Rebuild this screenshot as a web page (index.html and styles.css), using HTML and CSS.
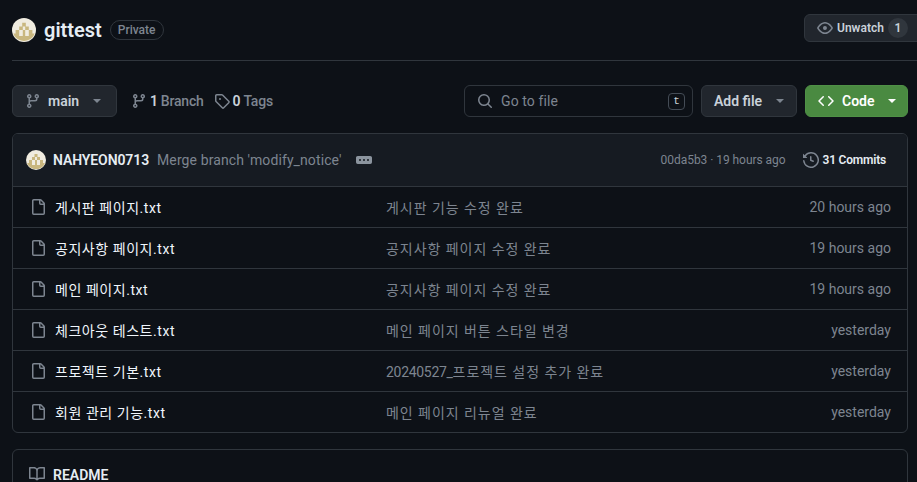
FILE: index.html
```html
<!DOCTYPE html>
<html lang="ko">
<head>
  <meta charset="UTF-8" />
  <title>gittest</title>
  <link rel="stylesheet" href="styles.css">
</head>
<body>

  <svg class="sprite" xmlns="http://www.w3.org/2000/svg">
    <symbol id="i-branch" viewBox="0 0 16 16"><path d="M9.5 3.25a2.25 2.25 0 1 1 3 2.122V6A2.5 2.5 0 0 1 10 8.5H6a1 1 0 0 0-1 1v1.128a2.251 2.251 0 1 1-1.5 0V5.372a2.25 2.25 0 1 1 1.5 0v1.836A2.493 2.493 0 0 1 6 7h4a1 1 0 0 0 1-1v-.628A2.25 2.25 0 0 1 9.5 3.25Zm-6 0a.75.75 0 1 0 1.5 0 .75.75 0 0 0-1.5 0Zm8.25-.75a.75.75 0 1 0 0 1.5.75.75 0 0 0 0-1.5ZM4.25 12a.75.75 0 1 0 0 1.5.75.75 0 0 0 0-1.5Z"/></symbol>
    <symbol id="i-tag" viewBox="0 0 16 16"><path d="M1 7.775V2.75C1 1.784 1.784 1 2.75 1h5.025c.464 0 .91.184 1.238.513l6.25 6.25a1.75 1.75 0 0 1 0 2.474l-5.026 5.026a1.75 1.75 0 0 1-2.474 0l-6.25-6.25A1.752 1.752 0 0 1 1 7.775Zm1.5 0c0 .066.026.13.073.177l6.25 6.25a.25.25 0 0 0 .354 0l5.025-5.025a.25.25 0 0 0 0-.354l-6.25-6.25a.25.25 0 0 0-.177-.073H2.75a.25.25 0 0 0-.25.25ZM6 5a1 1 0 1 1 0 2 1 1 0 0 1 0-2Z"/></symbol>
    <symbol id="i-eye" viewBox="0 0 16 16"><path d="M8 2c1.981 0 3.671.992 4.933 2.078 1.27 1.091 2.187 2.345 2.637 3.023a1.62 1.62 0 0 1 0 1.798c-.45.678-1.367 1.932-2.637 3.023C11.67 13.008 9.981 14 8 14c-1.981 0-3.671-.992-4.933-2.078C1.797 10.83.88 9.576.43 8.898a1.62 1.62 0 0 1 0-1.798c.45-.677 1.367-1.931 2.637-3.022C4.33 2.992 6.019 2 8 2ZM1.679 7.932a.12.12 0 0 0 0 .136c.411.622 1.241 1.75 2.366 2.717C5.176 11.758 6.527 12.5 8 12.5c1.473 0 2.825-.742 3.955-1.715 1.124-.967 1.954-2.096 2.366-2.717a.12.12 0 0 0 0-.136c-.412-.621-1.242-1.75-2.366-2.717C10.824 4.242 9.473 3.5 8 3.5c-1.473 0-2.825.742-3.955 1.715-1.124.967-1.954 2.096-2.366 2.717ZM8 10a2 2 0 1 1-.001-3.999A2 2 0 0 1 8 10Z"/></symbol>
    <symbol id="i-search" viewBox="0 0 16 16"><path d="M10.68 11.74a6 6 0 0 1-7.922-8.982 6 6 0 0 1 8.982 7.922l3.04 3.04a.749.749 0 0 1-.326 1.275.749.749 0 0 1-.734-.215ZM11.5 7a4.499 4.499 0 1 0-8.997 0A4.499 4.499 0 0 0 11.5 7Z"/></symbol>
    <symbol id="i-code" viewBox="0 0 16 16"><path d="m11.28 3.22 4.25 4.25a.75.75 0 0 1 0 1.06l-4.25 4.25a.749.749 0 0 1-1.275-.326.749.749 0 0 1 .215-.734L13.94 8l-3.72-3.72a.749.749 0 0 1 .326-1.275.749.749 0 0 1 .734.215Zm-6.56 0a.751.751 0 0 1 1.042.018.751.751 0 0 1 .018 1.042L2.06 8l3.72 3.72a.749.749 0 0 1-.326 1.275.749.749 0 0 1-.734-.215L.47 8.53a.75.75 0 0 1 0-1.06Z"/></symbol>
    <symbol id="i-file" viewBox="0 0 16 16"><path d="M2 1.75C2 .784 2.784 0 3.75 0h6.586c.464 0 .909.184 1.237.513l2.914 2.914c.329.328.513.773.513 1.237v9.586A1.75 1.75 0 0 1 13.25 16h-9.5A1.75 1.75 0 0 1 2 14.25Zm1.75-.25a.25.25 0 0 0-.25.25v12.5c0 .138.112.25.25.25h9.5a.25.25 0 0 0 .25-.25V6h-2.75A1.75 1.75 0 0 1 9 4.25V1.5Zm6.75.062V4.25c0 .138.112.25.25.25h2.688l-.011-.013-2.914-2.914-.013-.011Z"/></symbol>
    <symbol id="i-history" viewBox="0 0 16 16"><path d="m.427 1.927 1.215 1.215a8.002 8.002 0 1 1-1.6 5.685.75.75 0 1 1 1.493-.154 6.5 6.5 0 1 0 1.18-4.458l1.358 1.358A.25.25 0 0 1 3.896 6H.25A.25.25 0 0 1 0 5.75V2.104a.25.25 0 0 1 .427-.177ZM7.75 4a.75.75 0 0 1 .75.75v2.992l2.028.812a.75.75 0 0 1-.557 1.392l-2.5-1A.751.751 0 0 1 7 8.25v-3.5A.75.75 0 0 1 7.75 4Z"/></symbol>
    <symbol id="i-ellipsis" viewBox="0 0 16 16"><path d="M0 5.75C0 4.784.784 4 1.75 4h12.5c.966 0 1.75.784 1.75 1.75v4.5A1.75 1.75 0 0 1 14.25 12H1.75A1.75 1.75 0 0 1 0 10.25ZM12 7a1 1 0 1 0 0 2 1 1 0 0 0 0-2ZM7 8a1 1 0 1 0 2 0 1 1 0 0 0-2 0ZM4 7a1 1 0 1 0 0 2 1 1 0 0 0 0-2Z"/></symbol>
    <symbol id="i-book" viewBox="0 0 16 16"><path d="M0 1.75A.75.75 0 0 1 .75 1h4.253c1.227 0 2.317.59 3 1.501A3.743 3.743 0 0 1 11.006 1h4.245a.75.75 0 0 1 .75.75v10.5a.75.75 0 0 1-.75.75h-4.507a2.25 2.25 0 0 0-1.591.659l-.622.621a.75.75 0 0 1-1.06 0l-.622-.621A2.25 2.25 0 0 0 5.258 13H.75a.75.75 0 0 1-.75-.75Zm7.251 10.324.004-5.073-.002-2.253A2.25 2.25 0 0 0 5.003 2.5H1.5v9h3.757a3.75 3.75 0 0 1 1.994.574ZM8.755 4.75l-.004 7.322a3.752 3.752 0 0 1 1.992-.572H14.5v-9h-3.495a2.25 2.25 0 0 0-2.25 2.25Z"/></symbol>
    <symbol id="i-avatar" viewBox="0 0 20 20">
      <circle cx="10" cy="10" r="10" fill="#f0ece0"/>
      <path fill="#c9b77f" d="M8.5 4h3v3h-3ZM6 7h3v3H6ZM11 7h3v3h-3ZM3 10h3v3H3ZM9 10h2v3H9ZM14 10h3v3h-3ZM2.5 15.7A10 10 0 0 1 1.2 13H6v2h3v-2h2v2h3v-2h4.8a10 10 0 0 1-1.3 2.7A10 10 0 0 1 2.5 15.7Z"/>
    </symbol>
  </svg>

  <header class="repo-head">
    <div class="repo-title">
      <svg class="avatar-lg"><use href="#i-avatar"/></svg>
      <strong class="repo-name">gittest</strong>
      <span class="label">Private</span>
    </div>
    <button class="btn btn-watch">
      <svg class="icon"><use href="#i-eye"/></svg>
      Unwatch
      <span class="count">1</span>
    </button>
  </header>

  <main class="content">
    <div class="toolbar">
      <button class="btn btn-branch">
        <svg class="icon"><use href="#i-branch"/></svg>
        main
        <span class="caret"></span>
      </button>
      <a class="meta-link"><svg class="icon"><use href="#i-branch"/></svg><b>1</b> Branch</a>
      <a class="meta-link meta-tags"><svg class="icon"><use href="#i-tag"/></svg><b>0</b> Tags</a>
      <div class="file-search">
        <svg class="icon"><use href="#i-search"/></svg>
        <span class="placeholder">Go to file</span>
        <kbd>t</kbd>
      </div>
      <button class="btn btn-add">Add file <span class="caret"></span></button>
      <button class="btn btn-code">
        <svg class="icon"><use href="#i-code"/></svg>
        Code
        <span class="caret"></span>
      </button>
    </div>

    <section class="files">
      <div class="commit-row">
        <svg class="avatar-sm"><use href="#i-avatar"/></svg>
        <strong class="author">NAHYEON0713</strong>
        <span class="commit-msg">Merge branch 'modify_notice'</span>
        <svg class="icon dots"><use href="#i-ellipsis"/></svg>
        <span class="commit-meta">00da5b3 · 19 hours ago</span>
        <span class="commit-count"><svg class="icon"><use href="#i-history"/></svg>31 Commits</span>
      </div>
      <div class="file-row">
        <svg class="icon"><use href="#i-file"/></svg>
        <a class="file-name">게시판 페이지.txt</a>
        <span class="file-msg">게시판 기능 수정 완료</span>
        <span class="file-age">20 hours ago</span>
      </div>
      <div class="file-row">
        <svg class="icon"><use href="#i-file"/></svg>
        <a class="file-name">공지사항 페이지.txt</a>
        <span class="file-msg">공지사항 페이지 수정 완료</span>
        <span class="file-age">19 hours ago</span>
      </div>
      <div class="file-row">
        <svg class="icon"><use href="#i-file"/></svg>
        <a class="file-name">메인 페이지.txt</a>
        <span class="file-msg">공지사항 페이지 수정 완료</span>
        <span class="file-age">19 hours ago</span>
      </div>
      <div class="file-row">
        <svg class="icon"><use href="#i-file"/></svg>
        <a class="file-name">체크아웃 테스트.txt</a>
        <span class="file-msg">메인 페이지 버튼 스타일 변경</span>
        <span class="file-age">yesterday</span>
      </div>
      <div class="file-row">
        <svg class="icon"><use href="#i-file"/></svg>
        <a class="file-name">프로젝트 기본.txt</a>
        <span class="file-msg"><span class="latin">20240527_</span>프로젝트 설정 추가 완료</span>
        <span class="file-age">yesterday</span>
      </div>
      <div class="file-row">
        <svg class="icon"><use href="#i-file"/></svg>
        <a class="file-name">회원 관리 기능.txt</a>
        <span class="file-msg">메인 페이지 리뉴얼 완료</span>
        <span class="file-age">yesterday</span>
      </div>
    </section>

    <section class="readme">
      <svg class="icon"><use href="#i-book"/></svg>
      <strong>README</strong>
    </section>
  </main>

</body>
</html>
```

FILE: styles.css
```css
html, body { height:100%; overflow:hidden; }
body { margin:0; background:#0d1117; color:#e6edf3; font-family:Roboto,"Noto Sans CJK KR",sans-serif; font-size:14px; }
.sprite { position:absolute; width:0; height:0; }
.icon { width:16px; height:16px; fill:#7d8590; flex:none; }

.repo-head { display:flex; justify-content:space-between; align-items:flex-start; height:61px; margin-left:12px; padding-top:14px; box-sizing:border-box; border-bottom:1px solid #30363d; width:905px; }
.repo-title { display:flex; align-items:center; height:32px; }
.avatar-lg { width:24px; height:24px; margin-right:8px; }
.repo-name { font-size:20px; font-weight:600; }
.label { margin-left:8px; padding:0 7px; height:20px; line-height:18px; box-sizing:border-box; font-size:12px; color:#7d8590; border:1px solid #30363d; border-radius:10px; font-weight:500; }

.btn { display:flex; align-items:center; box-sizing:border-box; background:#21262d; color:#c9d1d9; border:1px solid #30363d; border-radius:6px; font-family:inherit; font-weight:600; font-size:14px; height:32px; padding:0 12px; white-space:nowrap; flex:none; }
.btn-watch { width:140px; height:28px; margin-right:-27px; padding:0 12px; font-size:12px; gap:4px; }
.count { width:20px; height:20px; line-height:20px; border-radius:10px; background:#30363d; color:#c9d1d9; text-align:center; }
.caret { display:inline-block; width:0; height:0; border-style:solid; border-width:4px 4px 0; border-color:#7d8590 transparent transparent; margin-left:14px; }

.content { padding:24px 9px 0 12px; }
.toolbar { display:flex; align-items:center; height:32px; }
.btn-branch { width:105px; padding:0 12px; gap:7px; }
.btn-branch .caret { margin-left:7px; }
.meta-link { display:flex; align-items:center; gap:3px; color:#7d8590; margin-left:14px; font-weight:500; letter-spacing:-.2px; white-space:nowrap; }
.meta-link b { color:#c9d1d9; font-weight:600; }
.meta-tags { margin-left:10px; }
.file-search { display:flex; align-items:center; width:229px; height:32px; box-sizing:border-box; margin-left:auto; padding:0 7px 0 12px; border:1px solid #30363d; border-radius:6px; }
.placeholder { margin-left:8px; color:#7d8590; flex:1; letter-spacing:.1px; }
kbd { width:17px; height:17px; box-sizing:border-box; text-align:center; font:11px/15px "Liberation Mono",monospace; color:#c9d1d9; border:1px solid #444c56; border-radius:4px; }
.btn-add { width:96px; margin-left:8px; }
.btn-code { width:103px; margin-left:8px; background:#4a8a41; border-color:#4f9146; color:#fff; gap:8px; }
.btn-code .icon { fill:#fff; }
.btn-code .caret { border-top-color:#fff; margin-left:5px; }

.files { margin-top:16px; border:1px solid #30363d; border-radius:6px; overflow:hidden; }
.commit-row { display:flex; align-items:center; height:52px; padding:0 16px 0 13px; background:#161b22; }
.avatar-sm { width:20px; height:20px; margin-right:7px; }
.author { font-size:14px; font-weight:600; letter-spacing:-.1px; }
.commit-msg { margin-left:8px; color:#7d8590; font-size:14px; letter-spacing:.1px; }
.dots { margin-left:14px; fill:#8b949e; }
.commit-meta { margin-left:auto; font-size:12px; color:#7d8590; letter-spacing:-.05px; }
.commit-count { display:flex; align-items:center; gap:4px; margin-left:17px; margin-right:5px; font-size:12px; font-weight:600; letter-spacing:-.2px; }
.file-row { display:grid; grid-template-columns:16px 331px 1fr auto; align-items:center; height:41px; box-sizing:border-box; padding:0 16px 0 17px; border-top:1px solid #30363d; }
.file-name { margin-left:9px; color:#f0f6fc; white-space:nowrap; letter-spacing:.55px; }
.file-msg { margin-left:9px; color:#7d8590; letter-spacing:.95px; }
.latin { letter-spacing:-.3px; }
.file-age { color:#7d8590; }

.readme { display:flex; align-items:flex-start; gap:8px; margin-top:16px; height:60px; padding:15px 16px 0; box-sizing:border-box; border:1px solid #30363d; border-radius:6px; line-height:20px; font-size:14px; }
.readme .icon { margin-top:1px; }
.readme strong { font-weight:600; }
```
